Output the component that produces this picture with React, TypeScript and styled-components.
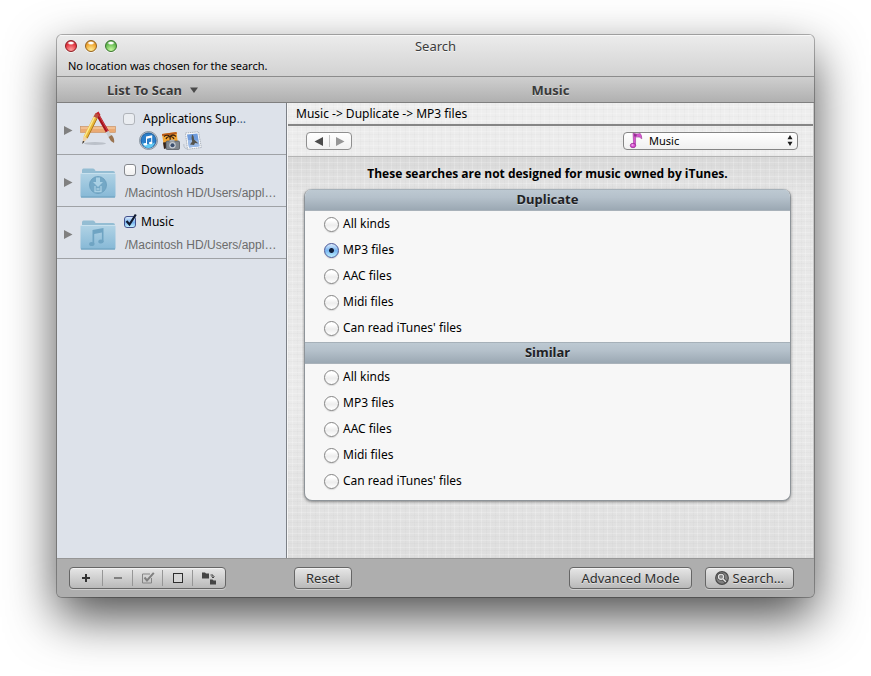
import React, { useState } from "react";
import styled, { createGlobalStyle, css } from "styled-components";

const GlobalStyle = createGlobalStyle`
  * { box-sizing: border-box; }
  body { margin: 0; background: #fff; }
  button, input, select { font: inherit; color: inherit; margin: 0; }
`;

const uiFont = `"Noto Sans", "Open Sans", sans-serif`;

const linen = `
  repeating-linear-gradient(0deg, rgba(0,0,0,.014) 0 1px, transparent 1px 3px, rgba(255,255,255,.2) 3px 4px, transparent 4px 7px),
  repeating-linear-gradient(90deg, rgba(0,0,0,.014) 0 1px, transparent 1px 4px, rgba(255,255,255,.2) 4px 5px, transparent 5px 9px)`;

const Page = styled.div`
  min-height: 100vh;
  display: flex;
  padding: 35px 57px 79px;
  overflow: hidden;
  font: 12px/16px ${uiFont};
  color: #000;
`;

const Window = styled.main`
  flex: 1;
  min-width: 0;
  display: flex;
  flex-direction: column;
  overflow: hidden;
  border-radius: 5px;
  background: #aeaeae;
  box-shadow: 0 0 0 1px rgba(0, 0, 0, 0.28), 0 20px 50px rgba(0, 0, 0, 0.7);
`;

const TitleBar = styled.header`
  height: 42px;
  padding: 2px 8px 0;
  background: linear-gradient(#ececec, #d2d2d2);
  border-bottom: 1px solid #8c8c8c;
  box-shadow: inset 0 1px #f8f8f8;
`;

const TitleRow = styled.div`
  display: grid;
  grid-template-columns: 1fr auto 1fr;
  align-items: center;
  height: 18px;
`;

const Lights = styled.div`
  display: flex;
  gap: 8px;
`;

const Light = styled.button<{ $edge: string; $fill: string; $glow: string }>`
  width: 12px;
  height: 12px;
  padding: 0;
  border: 1px solid ${(p) => p.$edge};
  border-radius: 50%;
  background: radial-gradient(ellipse 4px 2px at 50% 20%, #fff 40%, transparent 100%),
    radial-gradient(circle at 50% 90%, ${(p) => p.$glow} 0, ${(p) => p.$fill} 65%, ${(p) => p.$edge} 110%);
  box-shadow: 0 1px rgba(255, 255, 255, 0.6);
`;

const Title = styled.h1`
  margin: 0;
  font: 13px/18px ${uiFont};
  color: #3c3c3c;
  text-shadow: 0 1px rgba(255, 255, 255, 0.7);
`;

const Status = styled.p`
  margin: 3px 3px 0;
  font-size: 11px;
`;

const Strip = styled.div`
  display: flex;
  align-items: center;
  height: 26px;
  background: linear-gradient(#cfcfcf, #b0b0b0);
  border-bottom: 1px solid #7f7f7f;
  font: bold 13px/18px ${uiFont};
  color: #3a3a3a;
  text-shadow: 0 1px rgba(255, 255, 255, 0.5);
`;

const ListMenu = styled.button`
  display: flex;
  align-items: center;
  gap: 8px;
  width: 230px;
  padding: 0 0 0 50px;
  border: 0;
  background: none;
  text-shadow: inherit;
`;

const StripTitle = styled.h2`
  flex: 1;
  margin: 0;
  font: inherit;
  text-align: center;
`;

const Body = styled.div`
  flex: 1;
  display: flex;
`;

const Sidebar = styled.ul`
  flex: 0 0 230px;
  width: 230px;
  margin: 0;
  padding: 0;
  list-style: none;
  background: #dde2ea;
  border-right: 1px solid #7c8086;
`;

const Place = styled.li`
  display: flex;
  height: 52px;
  padding: 0 7px;
  border-bottom: 1px solid #9fa2a6;
`;

const Disclosure = styled.button`
  width: 16px;
  padding: 4px 0 0;
  border: 0;
  background: none;
  display: flex;
  align-items: center;
`;

const PlaceIcon = styled.div`
  width: 36px;
  margin-right: 7px;
  padding-top: 7px;
`;

const PlaceText = styled.div<{ $apps?: boolean }>`
  flex: 1;
  min-width: 0;
  padding: ${(p) => (p.$apps ? "7px 0 0" : "6px 0 0 1px")};
  display: flex;
  flex-direction: column;
  gap: ${(p) => (p.$apps ? 4 : 7)}px;
`;

const PlaceLabel = styled.label<{ $apps?: boolean }>`
  display: flex;
  align-items: center;
  gap: ${(p) => (p.$apps ? 8 : 5)}px;
  height: 17px;
`;

const Path = styled.span`
  padding-left: 1px;
  font: 12px/16px "Liberation Sans", Arial, sans-serif;
  color: #6c6c6c;
  white-space: nowrap;
`;

const Cut = styled.span`
  color: #3d6288;
`;

const MiniIcons = styled.div`
  display: flex;
  gap: 3px;
  padding-left: 16px;
`;

const TickBox = styled.span`
  display: grid;
  flex: none;
  width: 12px;
  height: 12px;

  > * { grid-area: 1 / 1; }
  > svg { pointer-events: none; overflow: visible; }
`;

const Tick = styled.input`
  appearance: none;
  width: 12px;
  height: 12px;
  border: 1px solid #86898e;
  border-radius: 3px;
  background: linear-gradient(#fff, #f0f0f0);

  &:checked {
    border-color: #42508c;
    background: linear-gradient(#d5e7fb, #77b3ee 55%, #c2f1ff);
  }
  &:disabled {
    border-color: #b0b4ba;
    background: #eaedf1;
  }
`;

const Detail = styled.section`
  flex: 1;
  min-width: 0;
  display: flex;
  flex-direction: column;
  border-left: 1px solid #f6f6f6;
  border-right: 1px solid #c8c8c8;
`;

const Crumbs = styled.nav`
  height: 23px;
  padding: 3px 8px 0;
  background: ${linen}, #eeeeee;
  border-bottom: 2px solid #858585;
`;

const Toolbar = styled.div`
  display: flex;
  align-items: center;
  justify-content: space-between;
  height: 31px;
  padding: 0 15px 0 18px;
  background: ${linen}, #ececec;
  border-bottom: 1px solid #b4b4b4;
`;

const NavPair = styled.div`
  display: flex;
  height: 18px;
  border: 1px solid #8f8f8f;
  border-radius: 4px;
  background: linear-gradient(#fff, #f1f1f1);
`;

const NavButton = styled.button`
  display: flex;
  align-items: center;
  justify-content: center;
  width: 22px;
  padding: 0;
  border: 0;
  background: none;
`;

const NavRule = styled.span`
  width: 1px;
  margin: 2px -1px 2px 0;
  background: #c4c4c4;
`;

const Picker = styled.div`
  position: relative;
  flex: 0 0 175px;
  height: 18px;
`;

const Select = styled.select`
  appearance: none;
  width: 100%;
  height: 18px;
  padding: 0 24px 0 25px;
  border: 1px solid #858585;
  border-radius: 4px;
  background: linear-gradient(#fff, #f0f0f0);
  font-size: 11px;
  line-height: 16px;
`;

const PickerIcon = styled.span<{ $side: "left" | "right" }>`
  position: absolute;
  top: 0;
  ${(p) => (p.$side === "left" ? css`left: 6px;` : css`right: 4px;`)}
  display: flex;
  pointer-events: none;
`;

const Content = styled.div`
  flex: 1;
  padding: 9px 22px 24px 16px;
  background: ${linen}, linear-gradient(#d9d9d9, #e6e6e6 40px, #ebebeb 60%, #dedede);
`;

const Note = styled.p`
  margin: 0 0 7px;
  font: bold 12px/16px "Open Sans", sans-serif;
  text-align: center;
`;

const Panel = styled.div`
  padding-bottom: 5px;
  border: 1px solid #8e9499;
  border-top: 0;
  border-radius: 8px;
  overflow: hidden;
  background: #f7f7f7;
  box-shadow: 0 1px 3px rgba(0, 0, 0, 0.4);
`;

const Group = styled.fieldset`
  margin: 0;
  padding: 0 0 1px;
  border: 0;
`;

const GroupTitle = styled.legend`
  width: 100%;
  height: 22px;
  padding: 0;
  background: linear-gradient(#8f989f, #bdc9d2 1px, #b5c1cb 40%, #9ba8b3);
  border-bottom: 1px solid #a9b2ba;
  font: bold 13px/21px ${uiFont};
  color: #1f2225;
  text-align: center;
  text-shadow: 0 1px rgba(255, 255, 255, 0.4);
`;

const Option = styled.label`
  display: flex;
  align-items: center;
  gap: 4px;
  height: 26px;
  padding-left: 19px;
`;

const Radio = styled.input`
  appearance: none;
  width: 15px;
  height: 15px;
  border: 1px solid #858585;
  border-radius: 50%;
  background: linear-gradient(#fff 20%, #ededed 55%, #fff);
  box-shadow: 0 1px 1px rgba(0, 0, 0, 0.12);

  &:checked {
    border-color: #4a5696;
    background: radial-gradient(circle, #10203c 2px, transparent 3px),
      linear-gradient(#dcebfc, #79b5f0 50%, #bdf0ff);
  }
`;

const Footer = styled.footer`
  display: flex;
  height: 39px;
  padding-top: 8px;
  background: #aeaeae;
  border-top: 1px solid #969696;
`;

const FooterLeft = styled.div`
  flex: 0 0 237px;
  padding-left: 12px;
`;

const FooterRight = styled.div`
  flex: 1;
  display: flex;
  gap: 13px;
  padding-right: 20px;
`;

const buttonFace = css`
  height: 22px;
  border: 1px solid #666;
  border-radius: 4px;
  background: linear-gradient(#e6e6e6, #b9b9b9);
  box-shadow: inset 0 1px rgba(255, 255, 255, 0.5), 0 1px rgba(255, 255, 255, 0.4);
`;

const Segments = styled.div`
  ${buttonFace}
  display: inline-flex;
`;

const Segment = styled.button`
  display: flex;
  align-items: center;
  justify-content: center;
  width: 30px;
  margin: 2px 0;
  padding: 0;
  border: 0;
  border-right: 1px solid #969696;
  background: none;

  &:first-child { width: 33px; }
  &:last-child { width: 32px; border-right: 0; }
`;

const PushButton = styled.button<{ $icon?: boolean }>`
  ${buttonFace}
  display: flex;
  align-items: center;
  gap: 4px;
  padding: 0 ${(p) => (p.$icon ? 9 : 11)}px;
  font-size: 13px;
  line-height: 18px;
  color: #2e2e2e;
  white-space: nowrap;
  text-shadow: 0 1px rgba(255, 255, 255, 0.5);
`;

const Spacer = styled.div`
  flex: 1;
`;

const AppsIcon = () => (
  <svg width="36" height="38" viewBox="0 0 36 38" aria-hidden="true">
    <ellipse cx="15" cy="33.500" rx="11" ry="1.500" fill="#9aa0a8" opacity=".5" />
    <rect x="0.5" y="16.500" width="35" height="6" fill="#eaaa74" stroke="#c9905f" strokeWidth=".6" />
    <path d="M1 18h34" stroke="#f8d3ad" />
    <path d="M17.500 4.500 L27.500 22" stroke="#a3131c" strokeWidth="3.400" />
    <path d="M18.300 4 L28 21.500" stroke="#dc4a52" strokeWidth=".8" />
    <path d="M15.800 3.200 L18.500 1.500 L20.500 5 L17 7Z" fill="#c51f28" />
    <path d="M27.200 21.500 L30 26.500" stroke="#c9cdd0" strokeWidth="3.400" />
    <path d="M28.500 27 L31.800 25 Q35 29 34 33 Q30 31 28.500 27Z" fill="#9a7450" />
    <path d="M15.500 7.500 L5.500 27.500" stroke="#e9b93a" strokeWidth="4.400" />
    <path d="M14.500 7 L4.500 27" stroke="#fbe88e" strokeWidth="1.500" />
    <path d="M17.100 8.300 L7.200 28.300" stroke="#a06a1a" strokeWidth=".8" />
    <path d="M13.500 6.500 L15.500 3 L19 4.800 L17.600 8.500Z" fill="#b8503f" />
    <path d="M3.300 26.500 L7.600 28.600 L2.500 33.500Z" fill="#efd0a4" />
    <path d="M2.900 30.800 L4.500 31.800 L2.200 34Z" fill="#2b2b2b" />
  </svg>
);

const FolderIcon = ({ kind }: { kind: "down" | "music" }) => (
  <svg width="36" height="38" viewBox="0 0 36 38" aria-hidden="true">
    <defs>
      <linearGradient id={`folder-${kind}`} x1="0" y1="0" x2="0" y2="1">
        <stop offset="0" stopColor="#b1d3e5" />
        <stop offset="1" stopColor="#86b8d6" />
      </linearGradient>
    </defs>
    <path d="M2 11V8.500Q2 6.500 3.500 6.500H13Q14.500 6.500 15 8L15.500 9H33Q35 9 35 11V14H2Z" fill="#94bdd3" />
    <rect x="0.500" y="11" width="35" height="24.500" rx="1.500" fill={`url(#folder-${kind})`} />
    <path d="M1 11.500H35" stroke="#c8e1ee" />
    <path d="M1 35H35" stroke="#6a9ebc" />
    {kind === "down" ? (
      <g transform="translate(0 1.500)">
        <circle cx="18" cy="21.500" r="8.500" fill="#74a8c6" stroke="#679cbb" strokeWidth=".8" />
        <path d="M16 14H20V18.500H23L18 23.500L13 18.500H16Z" fill="#a9d0e4" />
        <path d="M15 22.500V28H21V22.500M16.500 25.500H19.500" fill="none" stroke="#a9d0e4" strokeWidth="1.300" />
      </g>
    ) : (
      <g fill="#6fa4c3" transform="translate(0 1.500)">
        <path d="M12.500 14.500L23.500 12.500V26H21.900V17L14.200 18.400V28.500H12.500Z" />
        <ellipse cx="11.800" cy="28.500" rx="2.700" ry="2.100" />
        <ellipse cx="21" cy="26" rx="2.700" ry="2.100" />
      </g>
    )}
  </svg>
);

const ITunesIcon = () => (
  <svg width="19" height="19" viewBox="0 0 19 19" aria-hidden="true">
    <circle cx="9.500" cy="9.500" r="9" fill="#dfe5ea" stroke="#6f7d8c" strokeWidth=".8" />
    <circle cx="9.500" cy="9.500" r="7.700" fill="#2a7fca" stroke="#14437a" strokeWidth=".7" />
    <path d="M3 11.500Q9.500 15 16 11.500Q14 17 9.500 17Q5 17 3 11.500Z" fill="#5fc8f2" />
    <path d="M7 5.500L13.200 4.200V12H12.200V6.800L8 7.700V13.200H7Z" fill="#fff" />
    <ellipse cx="6.400" cy="13.200" rx="1.700" ry="1.300" fill="#fff" />
    <ellipse cx="11.700" cy="12" rx="1.700" ry="1.300" fill="#fff" />
  </svg>
);

const PhotoIcon = () => (
  <svg width="19" height="19" viewBox="0 0 19 19" aria-hidden="true">
    <path d="M1 3L15.500 1L17 13L3 16Z" fill="#f3a633" />
    <path d="M1 3L15.500 1L15.800 3L1.300 5Z" fill="#b85a1b" />
    <path d="M9.500 13L9 5.500M9 5.500Q6 3 3 5.500M9 5.500Q12 2.500 15 5.500M9 5.500Q6 5.500 5 8M9 5.500Q12 5.500 13 8" fill="none" stroke="#3a2110" strokeWidth="1.200" />
    <path d="M2 11.500L16 10L17 13L3 18Z" fill="#33221a" />
    <rect x="5" y="10" width="13.500" height="8.500" rx="1.200" fill="#7f868d" stroke="#4b4f54" strokeWidth=".7" />
    <rect x="8.500" y="8.700" width="5" height="2" fill="#a9aeb4" />
    <circle cx="11.500" cy="14.300" r="3.200" fill="#c5cbd2" />
    <circle cx="11.500" cy="14.300" r="2" fill="#3c506f" />
  </svg>
);

const MailIcon = () => (
  <svg width="19" height="19" viewBox="0 0 19 19" aria-hidden="true">
    <path d="M2.500 2L15.500 0.800L18.300 16.500L4.500 18.300Z" fill="#fdfdfd" stroke="#9aa3ae" strokeWidth=".8" strokeDasharray="1.500 .7" />
    <path d="M4 3.500L14.500 2.500L16.500 15.200L6 16.600Z" fill="#6f9cdc" />
    <path d="M4.800 9L15.600 9.500L16.500 15.200L6 16.600Z" fill="#9bbbe8" />
    <path d="M9 3.500Q11 4.500 11 8.500L15.500 12.500L12 12L11 14L7 13.500L9.200 10.500Q8 6.500 9 3.500Z" fill="#55544c" />
    <path d="M0.800 13Q0.500 18 5 18" fill="none" stroke="#b0b9c3" strokeWidth=".8" />
  </svg>
);

const Check = () => (
  <svg width="12" height="12" viewBox="0 0 12 12" aria-hidden="true">
    <path d="M2.500 5L5.500 8.500L11.800 -1.500" fill="none" stroke="#101a30" strokeWidth="2.200" />
  </svg>
);

const Arrow = ({ dir, color }: { dir: "left" | "right"; color: string }) => (
  <svg width="9" height="9" viewBox="0 0 9 9" aria-hidden="true">
    <path d={dir === "left" ? "M9 0V9L0.500 4.500Z" : "M0 0V9L8.500 4.500Z"} fill={color} />
  </svg>
);

const NoteIcon = () => (
  <svg width="14" height="17" viewBox="0 0 14 17" aria-hidden="true">
    <path d="M4 1.200Q8 2.600 11.200 1.400Q12.800 3 12.800 6.800Q11 4.300 6.600 5L6.500 13.500H4.700Z" fill="#d654cf" stroke="#9a3698" strokeWidth=".6" />
    <path d="M5 1.800L8 2.700L7 4.600H5.200Z" fill="#5b1a60" opacity=".6" />
    <ellipse cx="4" cy="13.500" rx="2.700" ry="2.200" fill="#d94fd2" stroke="#8e2a8c" strokeWidth=".7" />
    <ellipse cx="3.500" cy="13" rx="1.200" ry=".8" fill="#f7b5f3" />
  </svg>
);

const Stepper = () => (
  <svg width="8" height="17" viewBox="0 0 8 17" aria-hidden="true">
    <path d="M4 3L6.500 7.200H1.500ZM4 14L6.500 9.800H1.500Z" fill="#1c1c1c" />
  </svg>
);

const SearchIcon = () => (
  <svg width="14" height="14" viewBox="0 0 14 14" aria-hidden="true">
    <circle cx="7" cy="7" r="6.300" fill="#808080" stroke="#4a4a4a" strokeWidth="1.200" />
    <circle cx="6" cy="5.800" r="2.600" fill="none" stroke="#444" strokeWidth="2.400" />
    <path d="M8 8L11 11" stroke="#444" strokeWidth="3" />
    <circle cx="6" cy="5.800" r="2.600" fill="#8a8a8a" stroke="#e6e6e6" strokeWidth="1.100" />
    <path d="M8 8L10.800 10.800" stroke="#e6e6e6" strokeWidth="1.500" />
  </svg>
);

const segmentIcons = [
  {
    label: "Add",
    icon: (
      <svg width="10" height="10" viewBox="0 0 10 10">
        <path d="M5 1V9M1 5H9" stroke="#333" strokeWidth="2" />
      </svg>
    ),
  },
  {
    label: "Remove",
    icon: (
      <svg width="10" height="10" viewBox="0 0 10 10">
        <path d="M1 5H9" stroke="#808080" strokeWidth="2" />
      </svg>
    ),
  },
  {
    label: "Select all",
    icon: (
      <svg width="14" height="12" viewBox="0 0 14 12">
        <path d="M10.500 6V11H1.500V2H9" fill="none" stroke="#858585" />
        <path d="M3.500 5.500L6 8.500L12.800 0.800" fill="none" stroke="#808080" strokeWidth="2" />
      </svg>
    ),
  },
  {
    label: "Select none",
    icon: (
      <svg width="12" height="12" viewBox="0 0 12 12">
        <rect x="1.500" y="1.500" width="9" height="9" fill="#d6d6d6" stroke="#2e2e2e" />
      </svg>
    ),
  },
  {
    label: "Move to folder",
    icon: (
      <svg width="16" height="14" viewBox="0 0 16 14">
        <path d="M1 1.500H4L5 2.500H8V7.500H1Z" fill="#454545" />
        <path d="M9 8.500H11.500L12.500 9.500H15V13.500H9Z" fill="#454545" />
        <path d="M9.500 4H12V7M10.500 5.500L12 7L13.500 5.500" fill="none" stroke="#454545" />
      </svg>
    ),
  },
];

const kinds = ["All kinds", "MP3 files", "AAC files", "Midi files", "Can read iTunes' files"];

const places = [
  { name: "Downloads", kind: "down" as const },
  { name: "Music", kind: "music" as const },
];

export default function App() {
  const [choice, setChoice] = useState("Duplicate/MP3 files");
  const [ticked, setTicked] = useState<Record<string, boolean>>({ Music: true });

  return (
    <Page>
      <GlobalStyle />
      <Window>
        <TitleBar>
          <TitleRow>
            <Lights>
              <Light aria-label="Close" $edge="#8e1a20" $fill="#e2303c" $glow="#ffa3a0" />
              <Light aria-label="Minimize" $edge="#96611a" $fill="#efa22c" $glow="#ffee98" />
              <Light aria-label="Zoom" $edge="#38752c" $fill="#62b84e" $glow="#c9fba2" />
            </Lights>
            <Title>Search</Title>
          </TitleRow>
          <Status>No location was chosen for the search.</Status>
        </TitleBar>
        <Strip>
          <ListMenu>
            List To Scan
            <svg width="8" height="6" viewBox="0 0 8 6" aria-hidden="true">
              <path d="M0 0.500H8L4 6Z" fill="#4a4a4a" />
            </svg>
          </ListMenu>
          <StripTitle>Music</StripTitle>
        </Strip>
        <Body>
          <Sidebar>
            <Place>
              <Disclosure aria-label="Expand Applications Support">
                <Arrow dir="right" color="#808080" />
              </Disclosure>
              <PlaceIcon>
                <AppsIcon />
              </PlaceIcon>
              <PlaceText $apps>
                <PlaceLabel $apps>
                  <TickBox>
                    <Tick type="checkbox" disabled />
                  </TickBox>
                  <span>
                    Applications Sup<Cut>…</Cut>
                  </span>
                </PlaceLabel>
                <MiniIcons>
                  <ITunesIcon />
                  <PhotoIcon />
                  <MailIcon />
                </MiniIcons>
              </PlaceText>
            </Place>
            {places.map((p) => (
              <Place key={p.name}>
                <Disclosure aria-label={`Expand ${p.name}`}>
                  <Arrow dir="right" color="#808080" />
                </Disclosure>
                <PlaceIcon>
                  <FolderIcon kind={p.kind} />
                </PlaceIcon>
                <PlaceText>
                  <PlaceLabel>
                    <TickBox>
                      <Tick
                        type="checkbox"
                        checked={!!ticked[p.name]}
                        onChange={(e) => setTicked({ ...ticked, [p.name]: e.target.checked })}
                      />
                      {ticked[p.name] && <Check />}
                    </TickBox>
                    {p.name}
                  </PlaceLabel>
                  <Path>/Macintosh HD/Users/appl…</Path>
                </PlaceText>
              </Place>
            ))}
          </Sidebar>
          <Detail>
            <Crumbs>Music -&gt; Duplicate -&gt; MP3 files</Crumbs>
            <Toolbar>
              <NavPair>
                <NavButton aria-label="Back">
                  <Arrow dir="left" color="#4c4c4c" />
                </NavButton>
                <NavRule />
                <NavButton aria-label="Forward">
                  <Arrow dir="right" color="#969696" />
                </NavButton>
              </NavPair>
              <Picker>
                <Select aria-label="Search category" defaultValue="Music">
                  <option>Music</option>
                </Select>
                <PickerIcon $side="left">
                  <NoteIcon />
                </PickerIcon>
                <PickerIcon $side="right">
                  <Stepper />
                </PickerIcon>
              </Picker>
            </Toolbar>
            <Content>
              <Note>These searches are not designed for music owned by iTunes.</Note>
              <Panel>
                {["Duplicate", "Similar"].map((group) => (
                  <Group key={group}>
                    <GroupTitle>{group}</GroupTitle>
                    {kinds.map((kind) => (
                      <Option key={kind}>
                        <Radio
                          type="radio"
                          name="search-kind"
                          checked={choice === `${group}/${kind}`}
                          onChange={() => setChoice(`${group}/${kind}`)}
                        />
                        {kind}
                      </Option>
                    ))}
                  </Group>
                ))}
              </Panel>
            </Content>
          </Detail>
        </Body>
        <Footer>
          <FooterLeft>
            <Segments>
              {segmentIcons.map((s) => (
                <Segment key={s.label} aria-label={s.label}>
                  {s.icon}
                </Segment>
              ))}
            </Segments>
          </FooterLeft>
          <FooterRight>
            <PushButton>Reset</PushButton>
            <Spacer />
            <PushButton>Advanced Mode</PushButton>
            <PushButton $icon>
              <SearchIcon />
              Search…
            </PushButton>
          </FooterRight>
        </Footer>
      </Window>
    </Page>
  );
}
